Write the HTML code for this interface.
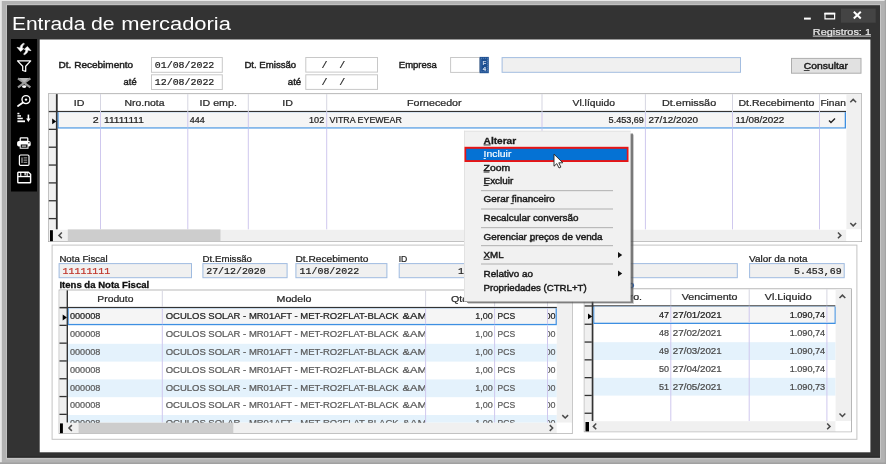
<!DOCTYPE html>
<html lang="pt-BR"><head><meta charset="utf-8"><title>Entrada de mercadoria</title>
<style>
html,body{margin:0;padding:0;background:#b2b2b2;overflow:hidden}
svg{display:block;filter:blur(0.35px)}
.s{font-family:"Liberation Sans","DejaVu Sans",sans-serif}
.m{font-family:"Liberation Mono","DejaVu Sans Mono",monospace}
</style></head><body>
<svg width="886" height="464" viewBox="0 0 886 464">
<rect x="0.00" y="0.00" width="886.00" height="464.00" fill="#b2b2b2" />
<rect x="0.00" y="0.00" width="884.80" height="1.00" fill="#e8e8e8" />
<rect x="0.00" y="0.00" width="1.80" height="462.40" fill="#e8e8e8" />
<rect x="884.80" y="0.00" width="1.20" height="464.00" fill="#a4a4a4" />
<rect x="0.00" y="462.50" width="886.00" height="1.50" fill="#a0a0a0" />
<rect x="6.20" y="4.30" width="874.80" height="455.10" fill="#c6c6c6" />
<rect x="7.00" y="5.20" width="873.00" height="452.40" fill="#333333" />
<rect x="7.00" y="456.60" width="873.00" height="1.00" fill="#262626" />
<rect x="39.70" y="39.50" width="830.70" height="412.80" fill="#ffffff" />
<rect x="11.00" y="39.00" width="26.00" height="152.50" fill="#000" />
<text class="s" y="30" font-size="18.9" fill="#fff" xml:space="preserve"><tspan x="11.9" textLength="73.6" lengthAdjust="spacingAndGlyphs">Entrada</tspan><tspan x="84.9" textLength="6.8" lengthAdjust="spacingAndGlyphs"> </tspan><tspan x="90.9" textLength="23.6" lengthAdjust="spacingAndGlyphs">de</tspan><tspan x="114.5" textLength="6.8" lengthAdjust="spacingAndGlyphs"> </tspan><tspan x="121.3" textLength="109.6" lengthAdjust="spacingAndGlyphs">mercadoria</tspan></text>
<rect x="804.00" y="17.60" width="6.80" height="2.00" fill="#fff" />
<path d="M825 13.5h9.6v5.4H825z" fill="none" stroke="#fff" stroke-width="1.2"/><rect x="824.4" y="12.6" width="10.8" height="2" fill="#fff"/>
<rect x="841.00" y="8.60" width="34.70" height="14.10" fill="#444" />
<path d="M853.8 11.8l7 6.6M860.8 11.8l-7 6.6" stroke="#fff" stroke-width="2" fill="none"/>
<text class="s" x="812.80" y="34.60" font-size="9.2" fill="#e8e8e8" textLength="58.2" lengthAdjust="spacingAndGlyphs" stroke="#e8e8e8" stroke-width="0.24" >Registros: 1</text>
<rect x="812.80" y="35.60" width="58.20" height="1.00" fill="#d8d8d8" />
<g fill="#fff" stroke="#fff" stroke-width="0.6" stroke-linejoin="round"><path d="M23.6 43.2C21.2 44.4 20 46.1 20.2 48L17 47.3L20.6 51.5L23.7 48.7L22.3 48.3C22 46.6 22.7 45.1 24.5 44.1Z"/><path d="M24.4 54.8C26.8 53.6 28 51.9 27.8 50L31 50.7L27.4 46.5L24.3 49.3L25.7 49.7C26 51.4 25.3 52.9 23.5 53.9Z"/></g>
<path d="M17.5 60.9H30.7L25.7 66.2V71.3L22.7 70.5V66.2Z" fill="none" stroke="#fff" stroke-width="1.25" stroke-linejoin="round"/>
<path d="M18 78.4l12.4 9M30.4 78.4l-12.4 9" stroke="#9a9a9a" stroke-width="2.2" fill="none"/><path d="M19 78h10.4l-5.2 4.6z" fill="#b8b8b8"/><ellipse cx="24.2" cy="86.6" rx="2.2" ry="1.3" fill="#fff"/>
<circle cx="26" cy="99.6" r="4" fill="none" stroke="#fff" stroke-width="1.4"/><path d="M23 102.6l-5 3.4" stroke="#fff" stroke-width="1.8" stroke-linecap="round"/><circle cx="26" cy="99.6" r="1.2" fill="#fff"/>
<g fill="#fff"><rect x="17.4" y="112.8" width="2" height="1.5"/><rect x="17.4" y="115.2" width="3.6" height="1.5"/><rect x="17.4" y="117.7" width="5.4" height="1.5"/><rect x="17.4" y="120.4" width="7.6" height="1.8"/><rect x="27.6" y="114.6" width="1.6" height="5"/><path d="M26.2 118.6h4.4l-2.2 3.4z"/></g>
<rect x="20.2" y="137.9" width="7.6" height="3.6" rx="0.8" fill="none" stroke="#fff" stroke-width="1.3"/><rect x="17.1" y="141" width="13.6" height="5.6" rx="1.8" fill="#fff"/><rect x="20.2" y="144" width="7.8" height="4.2" fill="#000" stroke="#fff" stroke-width="1"/><rect x="21.8" y="145.4" width="4.4" height="1.4" fill="#bbb"/><circle cx="28.9" cy="142.7" r="0.7" fill="#000"/>
<rect x="19.4" y="155" width="9.6" height="10.4" rx="1.2" fill="none" stroke="#fff" stroke-width="1.2"/><g fill="#aaa"><rect x="21.4" y="157.4" width="1.2" height="5.6"/><rect x="23.6" y="157.4" width="3.6" height="1"/><rect x="23.6" y="159.6" width="3.6" height="1"/><rect x="23.6" y="161.8" width="3.6" height="1"/></g>
<path d="M18.4 172.3h10l2.2 2v7.9a0.6 0.6 0 0 1-.6.6H18.4a0.6 0.6 0 0 1-.6-.6V172.9a0.6 0.6 0 0 1 .6-.6z" fill="none" stroke="#fff" stroke-width="1.4" stroke-linejoin="round"/><rect x="17.8" y="175.9" width="12.8" height="1.3" fill="#fff"/><rect x="20.2" y="172.3" width="1.1" height="4" fill="#fff"/><rect x="26.6" y="172.3" width="1.1" height="4" fill="#fff"/><rect x="24.4" y="173" width="1.5" height="2.4" fill="#ddd"/>
<text class="s" x="58.60" y="68.30" font-size="8.9" fill="#1e1e1e" textLength="74.6" lengthAdjust="spacingAndGlyphs" stroke="#1e1e1e" stroke-width="0.42" >Dt. Recebimento</text>
<text class="s" x="123.60" y="85.20" font-size="8.9" fill="#1e1e1e" textLength="13.0" lengthAdjust="spacingAndGlyphs" stroke="#1e1e1e" stroke-width="0.42" >até</text>
<text class="s" x="244.40" y="68.30" font-size="8.9" fill="#1e1e1e" textLength="51.8" lengthAdjust="spacingAndGlyphs" stroke="#1e1e1e" stroke-width="0.42" >Dt. Emissão</text>
<text class="s" x="287.80" y="85.20" font-size="8.9" fill="#1e1e1e" textLength="13.4" lengthAdjust="spacingAndGlyphs" stroke="#1e1e1e" stroke-width="0.42" >até</text>
<text class="s" x="398.80" y="68.30" font-size="8.9" fill="#1e1e1e" textLength="38.0" lengthAdjust="spacingAndGlyphs" stroke="#1e1e1e" stroke-width="0.42" >Empresa</text>
<rect x="151.50" y="57.50" width="70.80" height="14.80" fill="#fff" stroke="#c8c8c8" stroke-width="1"/>
<text class="m" transform="translate(154.80 68.20) scale(1.066 1)" font-size="9.3" fill="#222" stroke="#222" stroke-width="0.22" xml:space="preserve">01/08/2022</text>
<rect x="151.50" y="74.80" width="70.80" height="14.70" fill="#fff" stroke="#c8c8c8" stroke-width="1"/>
<text class="m" transform="translate(154.80 85.40) scale(1.066 1)" font-size="9.3" fill="#222" stroke="#222" stroke-width="0.22" xml:space="preserve">12/08/2022</text>
<rect x="305.80" y="57.50" width="71.70" height="14.60" fill="#fff" stroke="#c8c8c8" stroke-width="1"/>
<text class="m" transform="translate(309.60 68.20) scale(1.066 1)" font-size="9.3" fill="#222" stroke="#222" stroke-width="0.22" xml:space="preserve">  /  /</text>
<rect x="305.80" y="74.80" width="71.70" height="14.60" fill="#fff" stroke="#c8c8c8" stroke-width="1"/>
<text class="m" transform="translate(309.60 85.40) scale(1.066 1)" font-size="9.3" fill="#222" stroke="#222" stroke-width="0.22" xml:space="preserve">  /  /</text>
<rect x="450.60" y="57.50" width="28.90" height="14.90" fill="#fff" stroke="#c8c8c8" stroke-width="1"/>
<rect x="479.60" y="56.90" width="9.20" height="16.30" fill="#1d4f91" />
<rect x="480.9" y="58.3" width="6.6" height="13.5" fill="none" stroke="#7fa3d1" stroke-width="0.7" stroke-dasharray="1 1"/>
<text class="s" transform="translate(484.40 64.80) scale(1.0 1)" font-size="6.2" fill="#d4deee" text-anchor="middle" stroke="#d4deee" stroke-width="0.24" >F</text>
<text class="s" transform="translate(484.40 70.80) scale(1.0 1)" font-size="6.2" fill="#d4deee" text-anchor="middle" stroke="#d4deee" stroke-width="0.24" >4</text>
<rect x="502.10" y="57.60" width="238.40" height="14.70" fill="#f0f0f0" stroke="#a3bde0" stroke-width="1"/>
<rect x="791.50" y="58.40" width="69.50" height="14.80" fill="#e1e1e1" stroke="#adadad" stroke-width="1"/>
<text class="s" x="803.80" y="69.40" font-size="8.9" fill="#1a1a1a" textLength="44.2" lengthAdjust="spacingAndGlyphs" stroke="#1a1a1a" stroke-width="0.42" >Consultar</text>
<rect x="803.80" y="70.10" width="5.80" height="0.80" fill="#1a1a1a" />
<rect x="48.00" y="93.30" width="814.00" height="148.70" fill="#a6a6a6" />
<rect x="48.80" y="94.10" width="812.40" height="147.10" fill="#fff" />
<rect x="48.80" y="94.10" width="7.20" height="135.30" fill="#f0f0f0" />
<rect x="55.90" y="94.10" width="1.80" height="135.30" fill="#333333" />
<rect x="48.80" y="110.90" width="797.20" height="1.30" fill="#333333" />
<rect x="57.70" y="112.20" width="788.30" height="16.30" fill="#3d8fe2" />
<rect x="58.60" y="112.20" width="786.10" height="15.20" fill="#f5f5f5" />
<rect x="48.80" y="128.70" width="7.20" height="1.30" fill="#333333" />
<rect x="48.80" y="146.55" width="7.20" height="1.30" fill="#333333" />
<rect x="48.80" y="164.40" width="7.20" height="1.30" fill="#333333" />
<rect x="48.80" y="182.25" width="7.20" height="1.30" fill="#333333" />
<rect x="48.80" y="200.10" width="7.20" height="1.30" fill="#333333" />
<rect x="48.80" y="217.95" width="7.20" height="1.30" fill="#333333" />
<rect x="100.00" y="94.10" width="1.00" height="17.90" fill="#d6d6e2" />
<rect x="100.00" y="112.20" width="1.00" height="15.20" fill="#cfc8ee" />
<rect x="100.00" y="128.80" width="1.00" height="100.60" fill="#cfc8ee" />
<rect x="187.30" y="94.10" width="1.00" height="17.90" fill="#d6d6e2" />
<rect x="187.30" y="112.20" width="1.00" height="15.20" fill="#cfc8ee" />
<rect x="187.30" y="128.80" width="1.00" height="100.60" fill="#cfc8ee" />
<rect x="247.80" y="94.10" width="1.00" height="17.90" fill="#d6d6e2" />
<rect x="247.80" y="112.20" width="1.00" height="15.20" fill="#cfc8ee" />
<rect x="247.80" y="128.80" width="1.00" height="100.60" fill="#cfc8ee" />
<rect x="326.20" y="94.10" width="1.00" height="17.90" fill="#d6d6e2" />
<rect x="326.20" y="112.20" width="1.00" height="15.20" fill="#cfc8ee" />
<rect x="326.20" y="128.80" width="1.00" height="100.60" fill="#cfc8ee" />
<rect x="541.50" y="94.10" width="1.00" height="17.90" fill="#d6d6e2" />
<rect x="541.50" y="112.20" width="1.00" height="15.20" fill="#cfc8ee" />
<rect x="541.50" y="128.80" width="1.00" height="100.60" fill="#cfc8ee" />
<rect x="644.90" y="94.10" width="1.00" height="17.90" fill="#d6d6e2" />
<rect x="644.90" y="112.20" width="1.00" height="15.20" fill="#cfc8ee" />
<rect x="644.90" y="128.80" width="1.00" height="100.60" fill="#cfc8ee" />
<rect x="732.00" y="94.10" width="1.00" height="17.90" fill="#d6d6e2" />
<rect x="732.00" y="112.20" width="1.00" height="15.20" fill="#cfc8ee" />
<rect x="732.00" y="128.80" width="1.00" height="100.60" fill="#cfc8ee" />
<rect x="819.00" y="94.10" width="1.00" height="17.90" fill="#d6d6e2" />
<rect x="819.00" y="112.20" width="1.00" height="15.20" fill="#cfc8ee" />
<rect x="819.00" y="128.80" width="1.00" height="100.60" fill="#cfc8ee" />
<rect x="846.40" y="94.10" width="14.80" height="135.30" fill="#f0f0f0" />
<path d="M850.30 102.25L853.20 99.35L856.10 102.25" fill="none" stroke="#4a4a4a" stroke-width="1.5"/>
<path d="M850.30 222.95L853.20 225.85L856.10 222.95" fill="none" stroke="#4a4a4a" stroke-width="1.5"/>
<rect x="48.80" y="229.80" width="797.60" height="11.40" fill="#f0f0f0" />
<rect x="50.00" y="230.20" width="2.90" height="11.00" fill="#000" />
<rect x="67.80" y="229.40" width="152.70" height="11.80" fill="#cdcdcd" />
<path d="M61.85 232.50L58.95 235.40L61.85 238.30" fill="none" stroke="#4a4a4a" stroke-width="1.5"/>
<path d="M837.95 232.50L840.85 235.40L837.95 238.30" fill="none" stroke="#4a4a4a" stroke-width="1.5"/>
<rect x="846.40" y="229.40" width="14.80" height="11.80" fill="#fff" />
<path d="M52.2 118.6l4 2.8-4 2.8z" fill="#000"/>
<text class="s" transform="translate(79.20 105.50) scale(1.16 1)" font-size="9.2" fill="#2a2a2a" text-anchor="middle" stroke="#2a2a2a" stroke-width="0.24" >ID</text>
<text class="s" x="144.50" y="105.50" font-size="9.2" fill="#2a2a2a" text-anchor="middle" textLength="40.1" lengthAdjust="spacingAndGlyphs" stroke="#2a2a2a" stroke-width="0.24" >Nro.nota</text>
<text class="s" transform="translate(218.20 105.50) scale(1.16 1)" font-size="9.2" fill="#2a2a2a" text-anchor="middle" stroke="#2a2a2a" stroke-width="0.24" >ID emp.</text>
<text class="s" transform="translate(287.60 105.50) scale(1.16 1)" font-size="9.2" fill="#2a2a2a" text-anchor="middle" stroke="#2a2a2a" stroke-width="0.24" >ID</text>
<text class="s" transform="translate(434.30 105.50) scale(1.16 1)" font-size="9.2" fill="#2a2a2a" text-anchor="middle" stroke="#2a2a2a" stroke-width="0.24" >Fornecedor</text>
<text class="s" x="593.80" y="105.50" font-size="9.2" fill="#2a2a2a" text-anchor="middle" textLength="42.4" lengthAdjust="spacingAndGlyphs" stroke="#2a2a2a" stroke-width="0.24" >Vl.líquido</text>
<text class="s" x="689.10" y="105.50" font-size="9.2" fill="#2a2a2a" text-anchor="middle" textLength="54.1" lengthAdjust="spacingAndGlyphs" stroke="#2a2a2a" stroke-width="0.24" >Dt.emissão</text>
<text class="s" x="776.40" y="105.50" font-size="9.2" fill="#2a2a2a" text-anchor="middle" textLength="76.0" lengthAdjust="spacingAndGlyphs" stroke="#2a2a2a" stroke-width="0.24" >Dt.Recebimento</text>
<text class="s" x="820.40" y="105.50" font-size="9.2" fill="#2a2a2a" textLength="25.4" lengthAdjust="spacingAndGlyphs" stroke="#2a2a2a" stroke-width="0.24" >Finan</text>
<text class="s" transform="translate(98.80 123.00) scale(1.15 1)" font-size="9.3" fill="#222" text-anchor="end" stroke="#222" stroke-width="0.24" >2</text>
<text class="s" x="104.00" y="123.00" font-size="9.3" fill="#222" textLength="39.8" lengthAdjust="spacingAndGlyphs" stroke="#222" stroke-width="0.24" >11111111</text>
<text class="s" x="189.80" y="123.00" font-size="9.3" fill="#222" textLength="15.0" lengthAdjust="spacingAndGlyphs" stroke="#222" stroke-width="0.24" >444</text>
<text class="s" x="309.00" y="123.00" font-size="9.3" fill="#222" textLength="15.2" lengthAdjust="spacingAndGlyphs" stroke="#222" stroke-width="0.24" >102</text>
<text class="s" x="329.60" y="123.00" font-size="9.3" fill="#222" textLength="72.2" lengthAdjust="spacingAndGlyphs" stroke="#222" stroke-width="0.24" >VITRA EYEWEAR</text>
<text class="s" x="608.60" y="123.00" font-size="9.3" fill="#222" textLength="35.3" lengthAdjust="spacingAndGlyphs" stroke="#222" stroke-width="0.24" >5.453,69</text>
<text class="s" x="648.40" y="123.00" font-size="9.3" fill="#222" textLength="49.6" lengthAdjust="spacingAndGlyphs" stroke="#222" stroke-width="0.24" >27/12/2020</text>
<text class="s" x="735.60" y="123.00" font-size="9.3" fill="#222" textLength="48.6" lengthAdjust="spacingAndGlyphs" stroke="#222" stroke-width="0.24" >11/08/2022</text>
<path d="M829 120.4l2 2 4-3.8" fill="none" stroke="#222" stroke-width="1.4"/>
<rect x="52.10" y="245.10" width="804.80" height="194.20" fill="#fff" stroke="#c4c4c4" stroke-width="1"/>
<text class="s" x="59.40" y="261.70" font-size="8.9" fill="#1e1e1e" textLength="48.2" lengthAdjust="spacingAndGlyphs" stroke="#1e1e1e" stroke-width="0.24" >Nota Fiscal</text>
<rect x="59.10" y="263.60" width="132.40" height="14.10" fill="#f0f0f0" stroke="#9fbbe0" stroke-width="1"/>
<text class="m" transform="translate(62.60 274.00) scale(1.066 1)" font-size="9.3" fill="#c0362c" stroke="#c0362c" stroke-width="0.22" xml:space="preserve">11111111</text>
<text class="s" x="202.60" y="261.70" font-size="8.9" fill="#1e1e1e" textLength="49.4" lengthAdjust="spacingAndGlyphs" stroke="#1e1e1e" stroke-width="0.24" >Dt.Emissão</text>
<rect x="202.90" y="263.60" width="84.20" height="14.10" fill="#f0f0f0" stroke="#9fbbe0" stroke-width="1"/>
<text class="m" transform="translate(206.20 274.00) scale(1.066 1)" font-size="9.3" fill="#222" stroke="#222" stroke-width="0.22" xml:space="preserve">27/12/2020</text>
<text class="s" x="295.40" y="261.70" font-size="8.9" fill="#1e1e1e" textLength="73.0" lengthAdjust="spacingAndGlyphs" stroke="#1e1e1e" stroke-width="0.24" >Dt.Recebimento</text>
<rect x="295.90" y="263.60" width="91.00" height="14.10" fill="#f0f0f0" stroke="#9fbbe0" stroke-width="1"/>
<text class="m" transform="translate(299.60 274.00) scale(1.066 1)" font-size="9.3" fill="#222" stroke="#222" stroke-width="0.22" xml:space="preserve">11/08/2022</text>
<text class="s" x="398.70" y="261.70" font-size="8.9" fill="#1e1e1e" textLength="8.6" lengthAdjust="spacingAndGlyphs" stroke="#1e1e1e" stroke-width="0.24" >ID</text>
<rect x="399.20" y="263.60" width="74.30" height="14.10" fill="#f0f0f0" stroke="#9fbbe0" stroke-width="1"/>
<text class="m" transform="translate(464.00 274.00) scale(1.066 1)" font-size="9.3" fill="#222" stroke="#222" stroke-width="0.22" xml:space="preserve" text-anchor="end">1</text>
<text class="s" x="481.00" y="261.70" font-size="8.9" fill="#1e1e1e" textLength="50.0" lengthAdjust="spacingAndGlyphs" stroke="#1e1e1e" stroke-width="0.24" >Fornecedor</text>
<rect x="481.50" y="263.60" width="255.80" height="14.10" fill="#f0f0f0" stroke="#9fbbe0" stroke-width="1"/>
<text class="s" x="749.10" y="261.70" font-size="8.9" fill="#1e1e1e" textLength="58.4" lengthAdjust="spacingAndGlyphs" stroke="#1e1e1e" stroke-width="0.24" >Valor da nota</text>
<rect x="749.60" y="263.60" width="94.60" height="14.10" fill="#f0f0f0" stroke="#9fbbe0" stroke-width="1"/>
<text class="m" transform="translate(841.60 274.00) scale(1.066 1)" font-size="9.3" fill="#222" stroke="#222" stroke-width="0.22" xml:space="preserve" text-anchor="end">5.453,69</text>
<text class="s" x="59.40" y="287.80" font-size="8.9" fill="#111" textLength="89.8" lengthAdjust="spacingAndGlyphs" font-weight="700" stroke="#111" stroke-width="0.3" >Itens da Nota Fiscal</text>
<text class="s" x="584.00" y="287.80" font-size="8.9" fill="#1b5fc0" textLength="50.4" lengthAdjust="spacingAndGlyphs" font-weight="700" stroke="#1b5fc0" stroke-width="0.3" >Financeiro</text>
<rect x="58.70" y="289.60" width="513.90" height="144.40" fill="#a6a6a6" />
<rect x="59.50" y="290.40" width="512.30" height="142.80" fill="#fff" />
<rect x="67.80" y="343.80" width="489.00" height="17.80" fill="#e4f2fc" />
<rect x="67.80" y="379.40" width="489.00" height="17.80" fill="#e4f2fc" />
<rect x="67.80" y="415.00" width="489.00" height="7.70" fill="#e4f2fc" />
<rect x="59.50" y="290.40" width="7.30" height="132.30" fill="#f0f0f0" />
<rect x="66.60" y="290.40" width="1.40" height="132.30" fill="#333333" />
<rect x="59.50" y="306.90" width="497.50" height="1.50" fill="#333333" />
<rect x="67.90" y="308.30" width="489.10" height="16.90" fill="#3d8fe2" />
<rect x="68.70" y="308.30" width="486.90" height="15.60" fill="#f5f5f5" />
<rect x="59.50" y="324.70" width="7.30" height="1.30" fill="#333333" />
<rect x="59.50" y="342.50" width="7.30" height="1.30" fill="#333333" />
<rect x="59.50" y="360.30" width="7.30" height="1.30" fill="#333333" />
<rect x="59.50" y="378.10" width="7.30" height="1.30" fill="#333333" />
<rect x="59.50" y="395.90" width="7.30" height="1.30" fill="#333333" />
<rect x="59.50" y="413.70" width="7.30" height="1.30" fill="#333333" />
<rect x="161.80" y="290.40" width="1.00" height="16.50" fill="#d6d6e2" />
<rect x="161.80" y="308.20" width="1.00" height="16.10" fill="#cfc8ee" />
<rect x="161.80" y="325.60" width="1.00" height="97.10" fill="#cfc8ee" />
<rect x="425.10" y="290.40" width="1.00" height="16.50" fill="#d6d6e2" />
<rect x="425.10" y="308.20" width="1.00" height="16.10" fill="#cfc8ee" />
<rect x="425.10" y="325.60" width="1.00" height="97.10" fill="#cfc8ee" />
<rect x="494.10" y="290.40" width="1.00" height="16.50" fill="#d6d6e2" />
<rect x="494.10" y="308.20" width="1.00" height="16.10" fill="#cfc8ee" />
<rect x="494.10" y="325.60" width="1.00" height="97.10" fill="#cfc8ee" />
<rect x="547.00" y="290.40" width="1.00" height="16.50" fill="#d6d6e2" />
<rect x="547.00" y="308.20" width="1.00" height="16.10" fill="#cfc8ee" />
<rect x="547.00" y="325.60" width="1.00" height="97.10" fill="#cfc8ee" />
<rect x="556.80" y="290.40" width="15.00" height="132.30" fill="#f0f0f0" />
<path d="M561.50 299.05L564.40 296.15L567.30 299.05" fill="none" stroke="#4a4a4a" stroke-width="1.5"/>
<path d="M562.30 415.15L565.20 418.05L568.10 415.15" fill="none" stroke="#4a4a4a" stroke-width="1.5"/>
<rect x="59.50" y="422.70" width="497.30" height="10.50" fill="#f0f0f0" />
<rect x="60.00" y="423.40" width="2.90" height="9.80" fill="#000" />
<rect x="78.60" y="422.70" width="154.70" height="10.50" fill="#cdcdcd" />
<path d="M71.85 425.10L68.95 428.00L71.85 430.90" fill="none" stroke="#4a4a4a" stroke-width="1.5"/>
<path d="M549.75 425.10L552.65 428.00L549.75 430.90" fill="none" stroke="#4a4a4a" stroke-width="1.5"/>
<rect x="556.80" y="422.70" width="15.00" height="10.50" fill="#fff" />
<path d="M62.7 314.6l4.2 2.9-4.2 2.9z" fill="#000"/>
<clipPath id="ci"><rect x="59" y="290" width="497.8" height="132.7"/></clipPath><clipPath id="cm"><rect x="163" y="290" width="262" height="132.7"/></clipPath><clipPath id="cz"><rect x="548" y="290" width="7.6" height="132.7"/></clipPath>
<text class="s" x="115.40" y="301.90" font-size="9.2" fill="#2a2a2a" text-anchor="middle" textLength="36.2" lengthAdjust="spacingAndGlyphs" stroke="#2a2a2a" stroke-width="0.24" >Produto</text>
<text class="s" transform="translate(294.00 301.90) scale(1.16 1)" font-size="9.2" fill="#2a2a2a" text-anchor="middle" stroke="#2a2a2a" stroke-width="0.24" >Modelo</text>
<text class="s" transform="translate(451.00 301.90) scale(1.16 1)" font-size="9.2" fill="#2a2a2a" stroke="#2a2a2a" stroke-width="0.24" >Qtd</text>
<g clip-path="url(#ci)">
<text class="s" x="69.90" y="319.30" font-size="9.3" fill="#222" textLength="30.5" lengthAdjust="spacingAndGlyphs" stroke="#222" stroke-width="0.24" >000008</text>
</g><g clip-path="url(#cm)">
<text class="s" x="165.70" y="319.30" font-size="9.3" fill="#222" textLength="232.9" lengthAdjust="spacingAndGlyphs" stroke="#222" stroke-width="0.24" >OCULOS SOLAR - MR01AFT - MET-RO2FLAT-BLACK</text>
<text class="s" x="402.60" y="319.30" font-size="9.3" fill="#222" textLength="24.2" lengthAdjust="spacingAndGlyphs" stroke="#222" stroke-width="0.24" >&amp;AM</text>
</g><g clip-path="url(#ci)">
<text class="s" x="475.30" y="319.30" font-size="9.3" fill="#222" textLength="17.5" lengthAdjust="spacingAndGlyphs" stroke="#222" stroke-width="0.24" >1,00</text>
<text class="s" x="497.60" y="319.30" font-size="9.3" fill="#222" textLength="17.5" lengthAdjust="spacingAndGlyphs" stroke="#222" stroke-width="0.24" >PCS</text>
</g><g clip-path="url(#cz)">
<text class="s" x="538.00" y="319.30" font-size="9.3" fill="#222" textLength="17.5" lengthAdjust="spacingAndGlyphs" stroke="#222" stroke-width="0.24" >1,00</text>
</g>
<g clip-path="url(#ci)">
<text class="s" x="69.90" y="337.10" font-size="9.3" fill="#5a5a5a" textLength="30.5" lengthAdjust="spacingAndGlyphs" stroke="#5a5a5a" stroke-width="0.24" >000008</text>
</g><g clip-path="url(#cm)">
<text class="s" x="165.70" y="337.10" font-size="9.3" fill="#5a5a5a" textLength="232.9" lengthAdjust="spacingAndGlyphs" stroke="#5a5a5a" stroke-width="0.24" >OCULOS SOLAR - MR01AFT - MET-RO2FLAT-BLACK</text>
<text class="s" x="402.60" y="337.10" font-size="9.3" fill="#5a5a5a" textLength="24.2" lengthAdjust="spacingAndGlyphs" stroke="#5a5a5a" stroke-width="0.24" >&amp;AM</text>
</g><g clip-path="url(#ci)">
<text class="s" x="475.30" y="337.10" font-size="9.3" fill="#5a5a5a" textLength="17.5" lengthAdjust="spacingAndGlyphs" stroke="#5a5a5a" stroke-width="0.24" >1,00</text>
<text class="s" x="497.60" y="337.10" font-size="9.3" fill="#5a5a5a" textLength="17.5" lengthAdjust="spacingAndGlyphs" stroke="#5a5a5a" stroke-width="0.24" >PCS</text>
</g><g clip-path="url(#cz)">
<text class="s" x="538.00" y="337.10" font-size="9.3" fill="#5a5a5a" textLength="17.5" lengthAdjust="spacingAndGlyphs" stroke="#5a5a5a" stroke-width="0.24" >1,00</text>
</g>
<g clip-path="url(#ci)">
<text class="s" x="69.90" y="354.90" font-size="9.3" fill="#5a5a5a" textLength="30.5" lengthAdjust="spacingAndGlyphs" stroke="#5a5a5a" stroke-width="0.24" >000008</text>
</g><g clip-path="url(#cm)">
<text class="s" x="165.70" y="354.90" font-size="9.3" fill="#5a5a5a" textLength="232.9" lengthAdjust="spacingAndGlyphs" stroke="#5a5a5a" stroke-width="0.24" >OCULOS SOLAR - MR01AFT - MET-RO2FLAT-BLACK</text>
<text class="s" x="402.60" y="354.90" font-size="9.3" fill="#5a5a5a" textLength="24.2" lengthAdjust="spacingAndGlyphs" stroke="#5a5a5a" stroke-width="0.24" >&amp;AM</text>
</g><g clip-path="url(#ci)">
<text class="s" x="475.30" y="354.90" font-size="9.3" fill="#5a5a5a" textLength="17.5" lengthAdjust="spacingAndGlyphs" stroke="#5a5a5a" stroke-width="0.24" >1,00</text>
<text class="s" x="497.60" y="354.90" font-size="9.3" fill="#5a5a5a" textLength="17.5" lengthAdjust="spacingAndGlyphs" stroke="#5a5a5a" stroke-width="0.24" >PCS</text>
</g><g clip-path="url(#cz)">
<text class="s" x="538.00" y="354.90" font-size="9.3" fill="#5a5a5a" textLength="17.5" lengthAdjust="spacingAndGlyphs" stroke="#5a5a5a" stroke-width="0.24" >1,00</text>
</g>
<g clip-path="url(#ci)">
<text class="s" x="69.90" y="372.70" font-size="9.3" fill="#5a5a5a" textLength="30.5" lengthAdjust="spacingAndGlyphs" stroke="#5a5a5a" stroke-width="0.24" >000008</text>
</g><g clip-path="url(#cm)">
<text class="s" x="165.70" y="372.70" font-size="9.3" fill="#5a5a5a" textLength="232.9" lengthAdjust="spacingAndGlyphs" stroke="#5a5a5a" stroke-width="0.24" >OCULOS SOLAR - MR01AFT - MET-RO2FLAT-BLACK</text>
<text class="s" x="402.60" y="372.70" font-size="9.3" fill="#5a5a5a" textLength="24.2" lengthAdjust="spacingAndGlyphs" stroke="#5a5a5a" stroke-width="0.24" >&amp;AM</text>
</g><g clip-path="url(#ci)">
<text class="s" x="475.30" y="372.70" font-size="9.3" fill="#5a5a5a" textLength="17.5" lengthAdjust="spacingAndGlyphs" stroke="#5a5a5a" stroke-width="0.24" >1,00</text>
<text class="s" x="497.60" y="372.70" font-size="9.3" fill="#5a5a5a" textLength="17.5" lengthAdjust="spacingAndGlyphs" stroke="#5a5a5a" stroke-width="0.24" >PCS</text>
</g><g clip-path="url(#cz)">
<text class="s" x="538.00" y="372.70" font-size="9.3" fill="#5a5a5a" textLength="17.5" lengthAdjust="spacingAndGlyphs" stroke="#5a5a5a" stroke-width="0.24" >1,00</text>
</g>
<g clip-path="url(#ci)">
<text class="s" x="69.90" y="390.50" font-size="9.3" fill="#5a5a5a" textLength="30.5" lengthAdjust="spacingAndGlyphs" stroke="#5a5a5a" stroke-width="0.24" >000008</text>
</g><g clip-path="url(#cm)">
<text class="s" x="165.70" y="390.50" font-size="9.3" fill="#5a5a5a" textLength="232.9" lengthAdjust="spacingAndGlyphs" stroke="#5a5a5a" stroke-width="0.24" >OCULOS SOLAR - MR01AFT - MET-RO2FLAT-BLACK</text>
<text class="s" x="402.60" y="390.50" font-size="9.3" fill="#5a5a5a" textLength="24.2" lengthAdjust="spacingAndGlyphs" stroke="#5a5a5a" stroke-width="0.24" >&amp;AM</text>
</g><g clip-path="url(#ci)">
<text class="s" x="475.30" y="390.50" font-size="9.3" fill="#5a5a5a" textLength="17.5" lengthAdjust="spacingAndGlyphs" stroke="#5a5a5a" stroke-width="0.24" >1,00</text>
<text class="s" x="497.60" y="390.50" font-size="9.3" fill="#5a5a5a" textLength="17.5" lengthAdjust="spacingAndGlyphs" stroke="#5a5a5a" stroke-width="0.24" >PCS</text>
</g><g clip-path="url(#cz)">
<text class="s" x="538.00" y="390.50" font-size="9.3" fill="#5a5a5a" textLength="17.5" lengthAdjust="spacingAndGlyphs" stroke="#5a5a5a" stroke-width="0.24" >1,00</text>
</g>
<g clip-path="url(#ci)">
<text class="s" x="69.90" y="408.30" font-size="9.3" fill="#5a5a5a" textLength="30.5" lengthAdjust="spacingAndGlyphs" stroke="#5a5a5a" stroke-width="0.24" >000008</text>
</g><g clip-path="url(#cm)">
<text class="s" x="165.70" y="408.30" font-size="9.3" fill="#5a5a5a" textLength="232.9" lengthAdjust="spacingAndGlyphs" stroke="#5a5a5a" stroke-width="0.24" >OCULOS SOLAR - MR01AFT - MET-RO2FLAT-BLACK</text>
<text class="s" x="402.60" y="408.30" font-size="9.3" fill="#5a5a5a" textLength="24.2" lengthAdjust="spacingAndGlyphs" stroke="#5a5a5a" stroke-width="0.24" >&amp;AM</text>
</g><g clip-path="url(#ci)">
<text class="s" x="475.30" y="408.30" font-size="9.3" fill="#5a5a5a" textLength="17.5" lengthAdjust="spacingAndGlyphs" stroke="#5a5a5a" stroke-width="0.24" >1,00</text>
<text class="s" x="497.60" y="408.30" font-size="9.3" fill="#5a5a5a" textLength="17.5" lengthAdjust="spacingAndGlyphs" stroke="#5a5a5a" stroke-width="0.24" >PCS</text>
</g><g clip-path="url(#cz)">
<text class="s" x="538.00" y="408.30" font-size="9.3" fill="#5a5a5a" textLength="17.5" lengthAdjust="spacingAndGlyphs" stroke="#5a5a5a" stroke-width="0.24" >1,00</text>
</g>
<g clip-path="url(#ci)">
<text class="s" x="69.90" y="426.10" font-size="9.3" fill="#5a5a5a" textLength="30.5" lengthAdjust="spacingAndGlyphs" stroke="#5a5a5a" stroke-width="0.24" >000008</text>
</g><g clip-path="url(#cm)">
<text class="s" x="165.70" y="426.10" font-size="9.3" fill="#5a5a5a" textLength="232.9" lengthAdjust="spacingAndGlyphs" stroke="#5a5a5a" stroke-width="0.24" >OCULOS SOLAR - MR01AFT - MET-RO2FLAT-BLACK</text>
<text class="s" x="402.60" y="426.10" font-size="9.3" fill="#5a5a5a" textLength="24.2" lengthAdjust="spacingAndGlyphs" stroke="#5a5a5a" stroke-width="0.24" >&amp;AM</text>
</g><g clip-path="url(#ci)">
<text class="s" x="475.30" y="426.10" font-size="9.3" fill="#5a5a5a" textLength="17.5" lengthAdjust="spacingAndGlyphs" stroke="#5a5a5a" stroke-width="0.24" >1,00</text>
<text class="s" x="497.60" y="426.10" font-size="9.3" fill="#5a5a5a" textLength="17.5" lengthAdjust="spacingAndGlyphs" stroke="#5a5a5a" stroke-width="0.24" >PCS</text>
</g><g clip-path="url(#cz)">
<text class="s" x="538.00" y="426.10" font-size="9.3" fill="#5a5a5a" textLength="17.5" lengthAdjust="spacingAndGlyphs" stroke="#5a5a5a" stroke-width="0.24" >1,00</text>
</g>
<rect x="583.80" y="288.40" width="268.00" height="143.80" fill="#a6a6a6" />
<rect x="584.60" y="289.20" width="266.40" height="142.20" fill="#fff" />
<rect x="593.40" y="342.20" width="242.10" height="17.80" fill="#e4f2fc" />
<rect x="593.40" y="377.80" width="242.10" height="17.80" fill="#e4f2fc" />
<rect x="584.60" y="289.20" width="7.20" height="132.00" fill="#f0f0f0" />
<rect x="591.70" y="289.20" width="1.70" height="132.00" fill="#333333" />
<rect x="584.60" y="305.30" width="250.90" height="1.30" fill="#333333" />
<rect x="593.40" y="306.60" width="242.60" height="17.40" fill="#3d8fe2" />
<rect x="594.30" y="306.60" width="240.30" height="16.10" fill="#f5f5f5" />
<rect x="584.60" y="323.60" width="7.20" height="1.30" fill="#333333" />
<rect x="584.60" y="341.40" width="7.20" height="1.30" fill="#333333" />
<rect x="584.60" y="359.20" width="7.20" height="1.30" fill="#333333" />
<rect x="584.60" y="377.00" width="7.20" height="1.30" fill="#333333" />
<rect x="584.60" y="394.80" width="7.20" height="1.30" fill="#333333" />
<rect x="584.60" y="412.60" width="7.20" height="1.30" fill="#333333" />
<rect x="670.30" y="289.20" width="1.00" height="16.10" fill="#d6d6e2" />
<rect x="670.30" y="306.60" width="1.00" height="16.10" fill="#cfc8ee" />
<rect x="670.30" y="324.00" width="1.00" height="97.20" fill="#cfc8ee" />
<rect x="748.70" y="289.20" width="1.00" height="16.10" fill="#d6d6e2" />
<rect x="748.70" y="306.60" width="1.00" height="16.10" fill="#cfc8ee" />
<rect x="748.70" y="324.00" width="1.00" height="97.20" fill="#cfc8ee" />
<rect x="826.40" y="289.20" width="1.00" height="16.10" fill="#d6d6e2" />
<rect x="826.40" y="306.60" width="1.00" height="16.10" fill="#cfc8ee" />
<rect x="826.40" y="324.00" width="1.00" height="97.20" fill="#cfc8ee" />
<rect x="835.60" y="289.20" width="15.40" height="132.00" fill="#f0f0f0" />
<path d="M839.50 298.05L842.40 295.15L845.30 298.05" fill="none" stroke="#4a4a4a" stroke-width="1.5"/>
<path d="M839.50 413.55L842.40 416.45L845.30 413.55" fill="none" stroke="#4a4a4a" stroke-width="1.5"/>
<rect x="584.60" y="421.20" width="251.00" height="10.20" fill="#f0f0f0" />
<rect x="585.50" y="422.00" width="3.50" height="9.40" fill="#000" />
<path d="M596.25 423.50L593.35 426.40L596.25 429.30" fill="none" stroke="#4a4a4a" stroke-width="1.5"/>
<path d="M827.15 423.50L830.05 426.40L827.15 429.30" fill="none" stroke="#4a4a4a" stroke-width="1.5"/>
<rect x="835.60" y="421.20" width="15.40" height="10.20" fill="#fff" />
<path d="M588 313.5l4.2 2.9-4.2 2.9z" fill="#000"/>
<text class="s" transform="translate(632.00 300.20) scale(1.16 1)" font-size="9.2" fill="#2a2a2a" text-anchor="middle" stroke="#2a2a2a" stroke-width="0.24" >Nro.</text>
<text class="s" transform="translate(709.60 300.20) scale(1.16 1)" font-size="9.2" fill="#2a2a2a" text-anchor="middle" stroke="#2a2a2a" stroke-width="0.24" >Vencimento</text>
<text class="s" transform="translate(788.20 300.20) scale(1.16 1)" font-size="9.2" fill="#2a2a2a" text-anchor="middle" stroke="#2a2a2a" stroke-width="0.24" >Vl.Liquido</text>
<text class="s" x="659.00" y="318.40" font-size="9.3" fill="#222" textLength="10.0" lengthAdjust="spacingAndGlyphs" stroke="#222" stroke-width="0.24" >47</text>
<text class="s" x="672.80" y="318.40" font-size="9.3" fill="#222" textLength="48.9" lengthAdjust="spacingAndGlyphs" stroke="#222" stroke-width="0.24" >27/01/2021</text>
<text class="s" x="789.70" y="318.40" font-size="9.3" fill="#222" textLength="35.5" lengthAdjust="spacingAndGlyphs" stroke="#222" stroke-width="0.24" >1.090,74</text>
<text class="s" x="659.00" y="336.20" font-size="9.3" fill="#4a4a4a" textLength="10.0" lengthAdjust="spacingAndGlyphs" stroke="#4a4a4a" stroke-width="0.24" >48</text>
<text class="s" x="672.80" y="336.20" font-size="9.3" fill="#4a4a4a" textLength="48.9" lengthAdjust="spacingAndGlyphs" stroke="#4a4a4a" stroke-width="0.24" >27/02/2021</text>
<text class="s" x="789.70" y="336.20" font-size="9.3" fill="#4a4a4a" textLength="35.5" lengthAdjust="spacingAndGlyphs" stroke="#4a4a4a" stroke-width="0.24" >1.090,74</text>
<text class="s" x="659.00" y="354.00" font-size="9.3" fill="#4a4a4a" textLength="10.0" lengthAdjust="spacingAndGlyphs" stroke="#4a4a4a" stroke-width="0.24" >49</text>
<text class="s" x="672.80" y="354.00" font-size="9.3" fill="#4a4a4a" textLength="48.9" lengthAdjust="spacingAndGlyphs" stroke="#4a4a4a" stroke-width="0.24" >27/03/2021</text>
<text class="s" x="789.70" y="354.00" font-size="9.3" fill="#4a4a4a" textLength="35.5" lengthAdjust="spacingAndGlyphs" stroke="#4a4a4a" stroke-width="0.24" >1.090,74</text>
<text class="s" x="659.00" y="371.80" font-size="9.3" fill="#4a4a4a" textLength="10.0" lengthAdjust="spacingAndGlyphs" stroke="#4a4a4a" stroke-width="0.24" >50</text>
<text class="s" x="672.80" y="371.80" font-size="9.3" fill="#4a4a4a" textLength="48.9" lengthAdjust="spacingAndGlyphs" stroke="#4a4a4a" stroke-width="0.24" >27/04/2021</text>
<text class="s" x="789.70" y="371.80" font-size="9.3" fill="#4a4a4a" textLength="35.5" lengthAdjust="spacingAndGlyphs" stroke="#4a4a4a" stroke-width="0.24" >1.090,74</text>
<text class="s" x="659.00" y="389.60" font-size="9.3" fill="#4a4a4a" textLength="10.0" lengthAdjust="spacingAndGlyphs" stroke="#4a4a4a" stroke-width="0.24" >51</text>
<text class="s" x="672.80" y="389.60" font-size="9.3" fill="#4a4a4a" textLength="48.9" lengthAdjust="spacingAndGlyphs" stroke="#4a4a4a" stroke-width="0.24" >27/05/2021</text>
<text class="s" x="789.70" y="389.60" font-size="9.3" fill="#4a4a4a" textLength="35.5" lengthAdjust="spacingAndGlyphs" stroke="#4a4a4a" stroke-width="0.24" >1.090,73</text>
<rect x="468.00" y="134.50" width="166.00" height="169.40" fill="#555" opacity="0.3"/>
<rect x="467.00" y="133.50" width="166.00" height="169.40" fill="#555" opacity="0.7"/>
<rect x="464.00" y="130.80" width="166.60" height="170.70" fill="#f1f1f1" />
<rect x="464.00" y="130.80" width="166.80" height="0.70" fill="#dcdcdc" />
<rect x="464.00" y="130.80" width="0.70" height="170.70" fill="#dcdcdc" />
<text class="s" x="483.60" y="143.70" font-size="8.9" fill="#1a1a1a" textLength="32.6" lengthAdjust="spacingAndGlyphs" font-weight="700" stroke="#1a1a1a" stroke-width="0.3" >Alterar</text>
<rect x="464.50" y="146.80" width="164.00" height="15.20" fill="#e81414" />
<rect x="466.20" y="148.80" width="160.60" height="11.30" fill="#0572d4" />
<text class="s" x="483.60" y="157.20" font-size="8.9" fill="#fff" textLength="27.8" lengthAdjust="spacingAndGlyphs" stroke="#fff" stroke-width="0.15" >Incluir</text>
<text class="s" x="483.60" y="170.80" font-size="8.9" fill="#1a1a1a" textLength="26.6" lengthAdjust="spacingAndGlyphs" stroke="#1a1a1a" stroke-width="0.42" >Zoom</text>
<text class="s" x="483.60" y="184.30" font-size="8.9" fill="#1a1a1a" textLength="29.6" lengthAdjust="spacingAndGlyphs" stroke="#1a1a1a" stroke-width="0.42" >Excluir</text>
<rect x="481.00" y="190.25" width="132.00" height="0.90" fill="#a8a8a8" />
<rect x="481.00" y="208.55" width="132.00" height="0.90" fill="#a8a8a8" />
<rect x="481.00" y="227.25" width="132.00" height="0.90" fill="#a8a8a8" />
<rect x="481.00" y="245.25" width="132.00" height="0.90" fill="#a8a8a8" />
<rect x="481.00" y="263.55" width="132.00" height="0.90" fill="#a8a8a8" />
<text class="s" x="483.60" y="202.40" font-size="8.9" fill="#1a1a1a" textLength="71.3" lengthAdjust="spacingAndGlyphs" stroke="#1a1a1a" stroke-width="0.42" >Gerar financeiro</text>
<text class="s" x="483.60" y="221.30" font-size="8.9" fill="#1a1a1a" textLength="94.8" lengthAdjust="spacingAndGlyphs" stroke="#1a1a1a" stroke-width="0.42" >Recalcular conversão</text>
<text class="s" x="483.60" y="239.60" font-size="8.9" fill="#1a1a1a" textLength="119.0" lengthAdjust="spacingAndGlyphs" stroke="#1a1a1a" stroke-width="0.42" >Gerenciar preços de venda</text>
<text class="s" x="483.60" y="258.00" font-size="8.9" fill="#1a1a1a" textLength="20.0" lengthAdjust="spacingAndGlyphs" stroke="#1a1a1a" stroke-width="0.42" >XML</text>
<text class="s" x="483.60" y="276.50" font-size="8.9" fill="#1a1a1a" textLength="49.4" lengthAdjust="spacingAndGlyphs" stroke="#1a1a1a" stroke-width="0.42" >Relativo ao</text>
<text class="s" x="483.60" y="290.50" font-size="8.9" fill="#1a1a1a" textLength="103.0" lengthAdjust="spacingAndGlyphs" stroke="#1a1a1a" stroke-width="0.42" >Propriedades (CTRL+T)</text>
<path d="M618 252l4.2 3-4.2 3z" fill="#111"/><path d="M618 270.4l4.2 3-4.2 3z" fill="#111"/>
<rect x="483.60" y="144.50" width="7.00" height="0.90" fill="#1a1a1a" />
<rect x="483.60" y="158.00" width="2.20" height="0.90" fill="#fff" />
<rect x="483.60" y="171.60" width="5.80" height="0.90" fill="#1a1a1a" />
<rect x="483.60" y="185.10" width="5.00" height="0.90" fill="#1a1a1a" />
<rect x="510.60" y="203.20" width="3.00" height="0.90" fill="#1a1a1a" />
<rect x="529.40" y="240.40" width="5.40" height="0.90" fill="#1a1a1a" />
<rect x="483.60" y="258.80" width="6.00" height="0.90" fill="#1a1a1a" />
<path d="M554 154.2v12l2.8-2.6 2.2 4.4 1.9-.9-2.1-4.3h4z" fill="#fff" stroke="#222" stroke-width="0.9" stroke-linejoin="round"/>
</svg>
</body></html>
